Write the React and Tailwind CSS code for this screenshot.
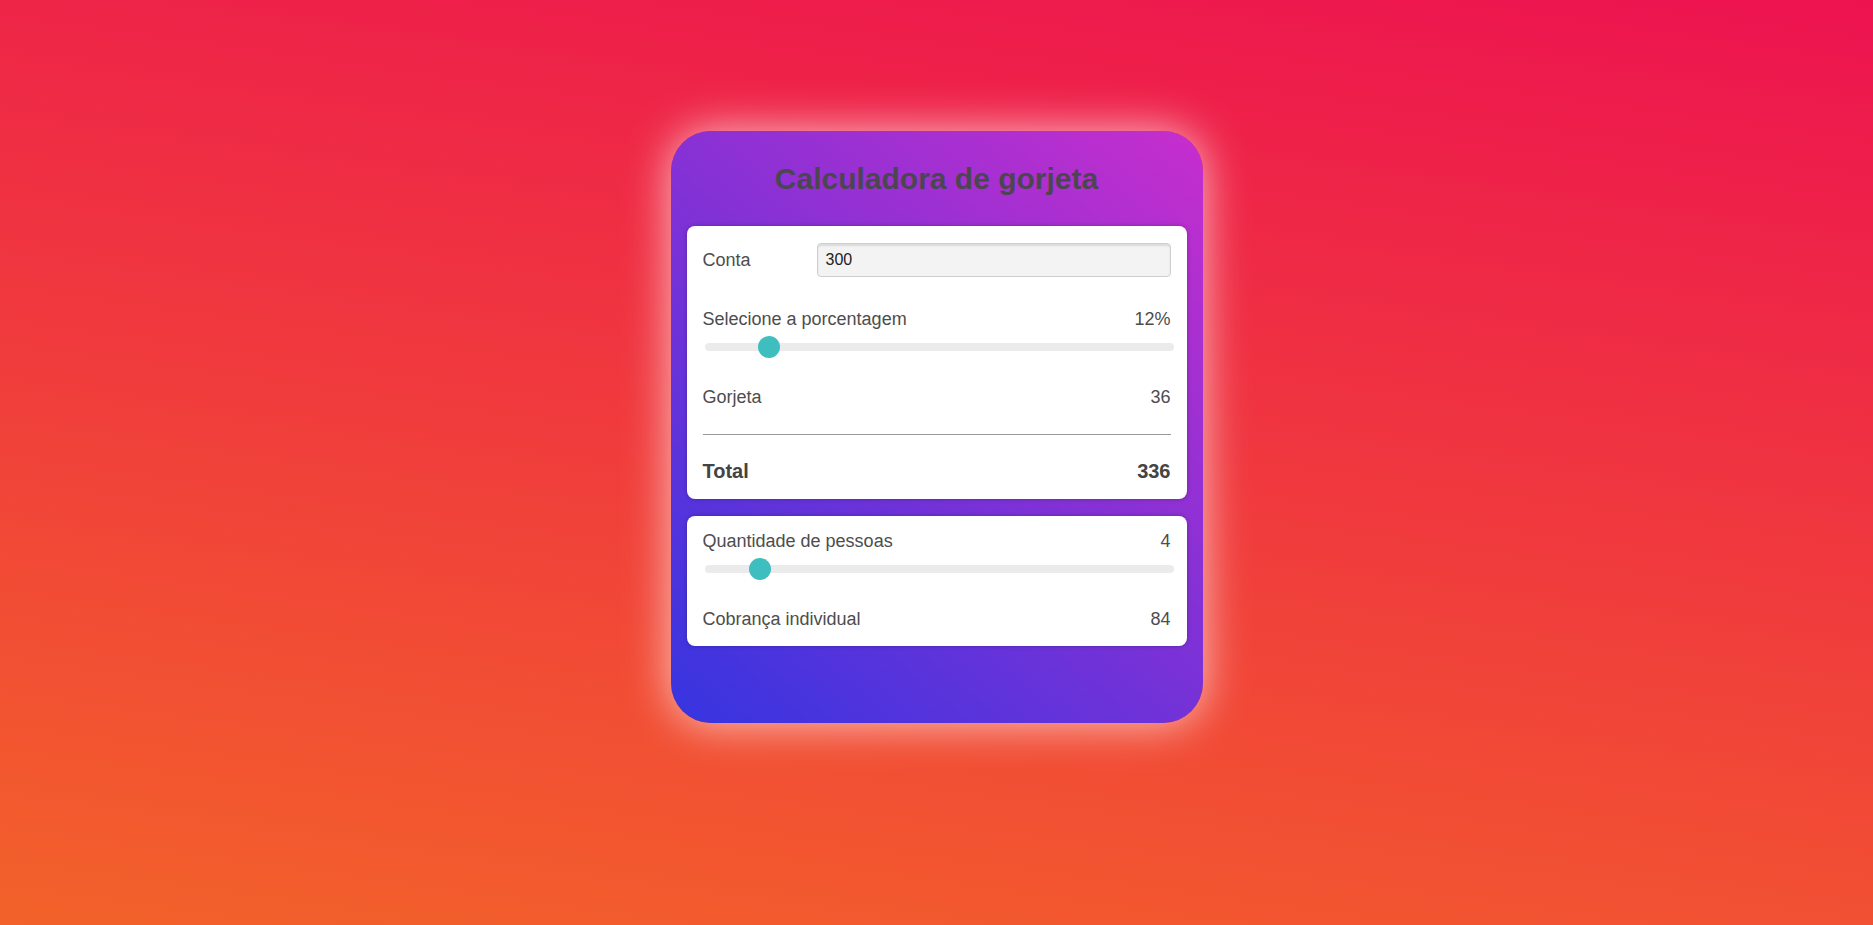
import React from "react";

function Slider({ frac }) {
  return (
    <div className="relative ml-[2px] mr-[-3px] h-[22px] flex items-center">
      <div className="h-[8px] w-full rounded-full bg-[#ebebeb]" />
      <div
        className="absolute top-0 h-[22px] w-[22px] rounded-full bg-[#3fbec0]"
        style={{ left: `calc(${frac} * (100% - 22px))` }}
      />
    </div>
  );
}

function Row({ left, right, className = "" }) {
  return (
    <div className={`flex items-center justify-between text-[18px] leading-[22px] text-[#4d4d4d] ${className}`}>
      <span>{left}</span>
      <span>{right}</span>
    </div>
  );
}

export default function App() {
  return (
    <div
      className="min-h-[925px] w-full bg-[linear-gradient(8deg,#f3622a,#ed1350)] pt-[131px]"
      style={{ fontFamily: '"Liberation Sans", Arial, sans-serif' }}
    >
      <div className="mx-auto h-[592px] w-[532px] rounded-[40px] bg-[linear-gradient(40deg,#3535e0,#c72ecd)] px-[16px] pt-[16px] shadow-[0_0_45px_rgba(255,255,255,0.7)]">
        <h1 className="mt-[14px] text-center text-[30px] font-bold leading-[36px] text-[#4b4650]">
          Calculadora de gorjeta
        </h1>

        <div className="mt-[29px] rounded-[8px] bg-white px-[16px] pt-[17px] pb-[16px] shadow-[0_0_4px_rgba(0,0,0,0.25)]">
          <div className="flex h-[34px] items-center">
            <span className="w-[114px] text-[18px] text-[#4d4d4d]">Conta</span>
            <div className="flex h-[34px] flex-1 items-center rounded-[4px] border border-[#cfcfcf] bg-[#f3f3f4] pl-[8px] text-[16px] text-[#222] shadow-[inset_0_2px_2px_rgba(0,0,0,0.1)]">
              300
            </div>
          </div>
          <Row className="mt-[31px]" left="Selecione a porcentagem" right="12%" />
          <div className="mt-[6px]">
            <Slider frac={0.12} />
          </div>
          <Row className="mt-[28px]" left="Gorjeta" right="36" />
          <div className="mt-[26px] h-px bg-[#9a9a9a]" />
          <div className="mt-[24px] flex items-center justify-between text-[20px] font-bold leading-[24px] text-[#444]">
            <span>Total</span>
            <span>336</span>
          </div>
        </div>

        <div className="mt-[17px] rounded-[8px] bg-white px-[16px] pt-[14px] pb-[16px] shadow-[0_0_4px_rgba(0,0,0,0.25)]">
          <Row left="Quantidade de pessoas" right="4" />
          <div className="mt-[6px]">
            <Slider frac={0.1} />
          </div>
          <Row className="mt-[28px]" left="Cobrança individual" right="84" />
        </div>
      </div>
    </div>
  );
}
